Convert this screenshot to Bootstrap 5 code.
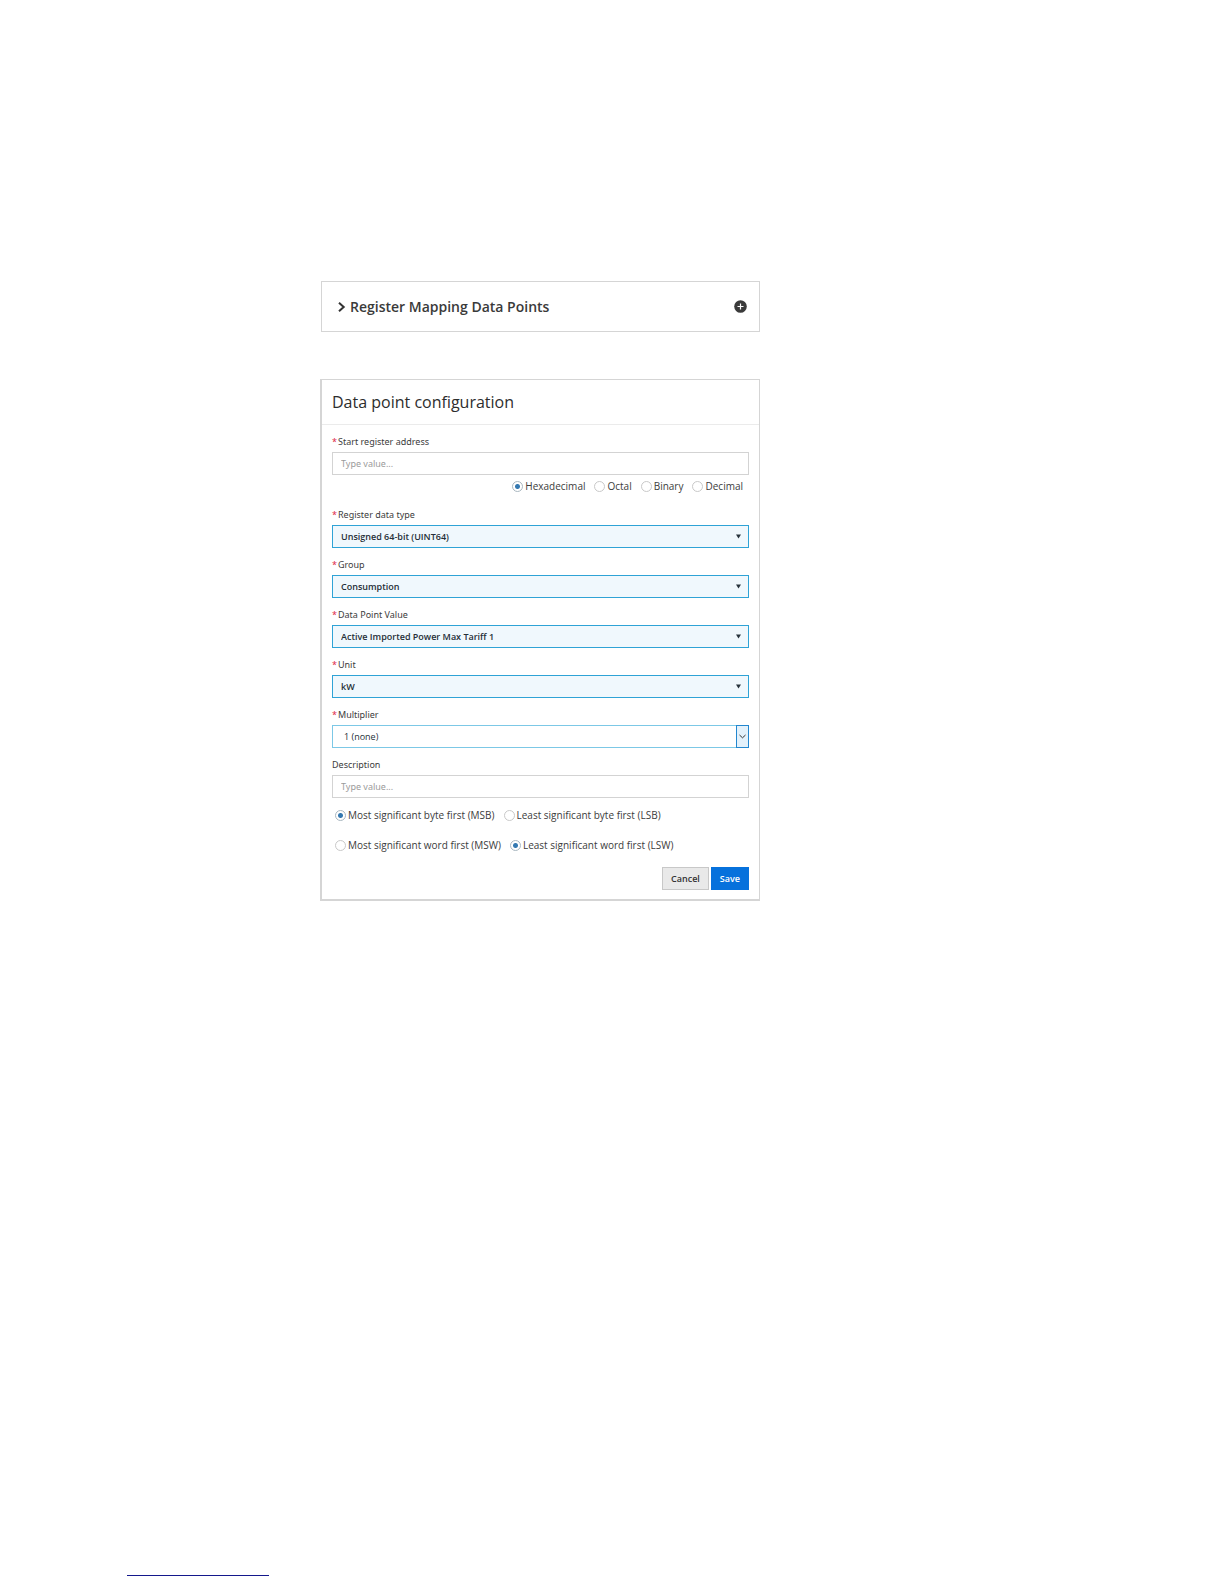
<!DOCTYPE html>
<html lang="en">
<head>
<meta charset="utf-8">
<meta name="viewport" content="width=device-width, initial-scale=1">
<title>Data point configuration</title>
<link href="https://cdn.jsdelivr.net/npm/bootstrap@5.3.0/dist/css/bootstrap.min.css" rel="stylesheet">
<style>
  body { font-family: "Noto Sans", "Open Sans", sans-serif; font-size: 10px; line-height: 16px; color: #3c3c3c; background: #fff; }
  .page-main { padding: 281px 16px 0 320px; }
  .panel-stack { max-width: 440px; gap: 47px; }
  .panel { border: 1px solid #d5d5d5; background: #fff; }
  .mapping-panel { min-height: 51px; margin-left: 1px; padding: 0 12px 0 16px; }
  .mapping-toggle { font-family: "Open Sans", "Noto Sans", sans-serif; font-size: 14px; line-height: 20px; font-weight: 600; color: #3a3a3a; gap: 4px; }
  .config-panel { border-left-width: 2px; border-bottom-width: 2px; }
  .config-header { height: 45px; padding: 0 10px; border-bottom: 1px solid #ebebeb; }
  .config-header h1 { font-family: "Open Sans", "Noto Sans", sans-serif; font-size: 16px; line-height: 20px; font-weight: 400; color: #2d2d2d; }
  .config-form { padding: 9px 10px; }
  .field { margin-bottom: 9px; }
  .field-label { display: block; font-size: 9px; line-height: 16px; margin-bottom: 2px; }
  .req { color: #e0284a; margin-right: 1px; }
  .field .form-control, .field .form-select { height: 23px; min-height: 0; padding: 0 8px; font-size: 9px; line-height: 16px; border: 1px solid #d3d3d3; border-radius: 0; color: #333; box-shadow: none; }
  .field .form-control::placeholder { color: #9b9b9b; }
  .field .form-select { font-family: "Open Sans", "Noto Sans", sans-serif; padding-right: 20px; border-color: #2fa3d6; background-color: #f0f8fd; background-image: none; font-weight: 600; color: #252f38; }
  .field .plain-select { background-color: #fff; border-color: #7cc8e6; font-weight: 400; padding-left: 11px; }
  .select-wrap { position: relative; }
  .caret { position: absolute; right: 8px; top: 9px; pointer-events: none; }
  .drop-box { position: absolute; right: 0; top: 0; bottom: 0; width: 13px; border: 1px solid #2387cf; background: #e3f1fb; pointer-events: none; }
  .choices { font-family: "Open Sans", "Noto Sans", sans-serif; gap: 9px; line-height: 16px; }
  .choice { gap: 2px; }
  .choice .form-check-input { width: 11px; height: 11px; margin: 0; border: 1px solid #c9c9c9; background-color: #fff; background-image: none; box-shadow: none; }
  .choice .form-check-input:checked { border-color: #a9b7c0; background-image: radial-gradient(circle, #3579b1 0 2px, transparent 3px); }
  .number-base { margin: 3px 6px 13px 0; }
  .byte-order { margin: 0 3px 14px; }
  .form-actions { gap: 2px; }
  .form-actions .btn { font-family: "Open Sans", "Noto Sans", sans-serif; height: 23px; padding: 0 8px; font-size: 9px; line-height: 16px; font-weight: 600; border-radius: 0; }
  .form-actions .btn-cancel { background: #e9e9e9; border: 1px solid #c8c8c8; color: #333; }
  .form-actions .btn-save { background: #0671dc; border: 1px solid #0671dc; color: #fff; }
  .page-footer { padding: 0 127px 8px; }
  .footer-link { display: block; width: 142px; height: 16px; border-bottom: 1px solid #14188c; }
</style>
</head>
<body class="d-flex flex-column min-vh-100">
<main class="page-main">
  <div class="panel-stack d-flex flex-column">
    <section class="panel mapping-panel d-flex align-items-center justify-content-between">
      <button type="button" class="mapping-toggle btn p-0 border-0 d-flex align-items-center">
        <svg width="8" height="10" viewBox="0 0 8 10" fill="none" stroke="#333" stroke-width="2" aria-hidden="true"><path d="M1 .8 5.7 5 1 9.2"/></svg>
        <span>Register Mapping Data Points</span>
      </button>
      <button type="button" class="btn p-0 border-0 d-flex" aria-label="Add">
        <svg width="13" height="13" viewBox="0 0 13 13" aria-hidden="true"><circle cx="6.5" cy="6.5" r="6.3" fill="#3a3a3a"/><path d="M6.5 3.5v6M3.5 6.5h6" stroke="#fff" stroke-width="1.2"/></svg>
      </button>
    </section>

    <section class="panel config-panel">
      <header class="config-header d-flex align-items-center"><h1 class="m-0">Data point configuration</h1></header>
      <form class="config-form">
        <div class="field mb-0">
          <label class="field-label" for="address"><span class="req">*</span>Start register address</label>
          <input class="form-control" id="address" type="text" placeholder="Type value...">
        </div>
        <div class="choices number-base d-flex flex-wrap justify-content-end">
          <label class="choice d-flex align-items-center"><input class="form-check-input" type="radio" name="base" checked>Hexadecimal</label>
          <label class="choice d-flex align-items-center"><input class="form-check-input" type="radio" name="base">Octal</label>
          <label class="choice d-flex align-items-center"><input class="form-check-input" type="radio" name="base">Binary</label>
          <label class="choice d-flex align-items-center"><input class="form-check-input" type="radio" name="base">Decimal</label>
        </div>
        <div class="field">
          <label class="field-label" for="dtype"><span class="req">*</span>Register data type</label>
          <div class="select-wrap"><select class="form-select" id="dtype"><option>Unsigned 64-bit (UINT64)</option></select>
            <svg class="caret" width="5" height="5" viewBox="0 0 5 5" aria-hidden="true"><path d="M0 .5h5L2.5 4.5z" fill="#26323b"/></svg></div>
        </div>
        <div class="field">
          <label class="field-label" for="group"><span class="req">*</span>Group</label>
          <div class="select-wrap"><select class="form-select" id="group"><option>Consumption</option></select>
            <svg class="caret" width="5" height="5" viewBox="0 0 5 5" aria-hidden="true"><path d="M0 .5h5L2.5 4.5z" fill="#26323b"/></svg></div>
        </div>
        <div class="field">
          <label class="field-label" for="dpv"><span class="req">*</span>Data Point Value</label>
          <div class="select-wrap"><select class="form-select" id="dpv"><option>Active Imported Power Max Tariff 1</option></select>
            <svg class="caret" width="5" height="5" viewBox="0 0 5 5" aria-hidden="true"><path d="M0 .5h5L2.5 4.5z" fill="#26323b"/></svg></div>
        </div>
        <div class="field">
          <label class="field-label" for="unit"><span class="req">*</span>Unit</label>
          <div class="select-wrap"><select class="form-select" id="unit"><option>kW</option></select>
            <svg class="caret" width="5" height="5" viewBox="0 0 5 5" aria-hidden="true"><path d="M0 .5h5L2.5 4.5z" fill="#26323b"/></svg></div>
        </div>
        <div class="field">
          <label class="field-label" for="mult"><span class="req">*</span>Multiplier</label>
          <div class="select-wrap"><select class="form-select plain-select" id="mult"><option>1 (none)</option></select>
            <span class="drop-box d-flex align-items-center justify-content-center"><svg width="7" height="5" viewBox="0 0 7 5" fill="none" stroke="#333" aria-hidden="true"><path d="M.5 1 3.5 3.8 6.5 1"/></svg></span></div>
        </div>
        <div class="field">
          <label class="field-label" for="desc">Description</label>
          <input class="form-control" id="desc" type="text" placeholder="Type value...">
        </div>
        <div class="choices byte-order d-flex flex-wrap">
          <label class="choice d-flex align-items-center"><input class="form-check-input" type="radio" name="byte" checked>Most significant byte first (MSB)</label>
          <label class="choice d-flex align-items-center"><input class="form-check-input" type="radio" name="byte">Least significant byte first (LSB)</label>
        </div>
        <div class="choices byte-order d-flex flex-wrap">
          <label class="choice d-flex align-items-center"><input class="form-check-input" type="radio" name="word">Most significant word first (MSW)</label>
          <label class="choice d-flex align-items-center"><input class="form-check-input" type="radio" name="word" checked>Least significant word first (LSW)</label>
        </div>
        <div class="form-actions d-flex justify-content-end">
          <button type="button" class="btn btn-cancel">Cancel</button>
          <button type="submit" class="btn btn-save">Save</button>
        </div>
      </form>
    </section>
  </div>
</main>
<footer class="page-footer mt-auto"><a class="footer-link" href="#" aria-label="Footer link"></a></footer>
<script src="https://cdn.jsdelivr.net/npm/bootstrap@5.3.0/dist/js/bootstrap.bundle.min.js"></script>
</body>
</html>
